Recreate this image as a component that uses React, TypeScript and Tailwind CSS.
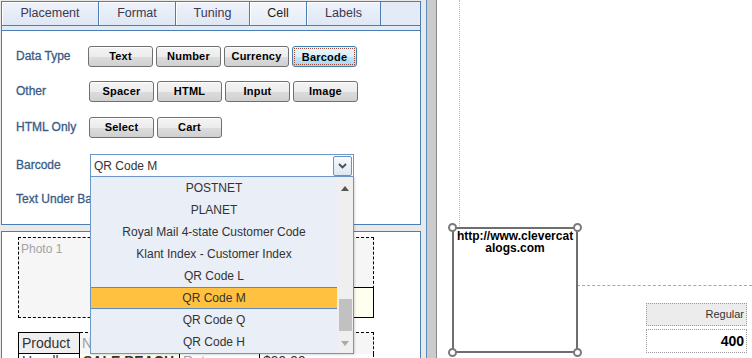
import React from "react";

function Btn({ children, active }: { children: React.ReactNode; active?: boolean }) {
  if (active) {
    return (
      <div className="w-[65px] h-[21px] rounded-[3px] border border-[#3c7fb1] bg-[linear-gradient(#eaf6fd_0%,#d9f0fc_50%,#bee6fd_50%,#a7d9f5_100%)] p-[1px] flex shrink-0">
        <div className="flex-1 border border-dotted border-[#9a4a3a] flex items-center justify-center text-[11px] font-bold text-black pt-[1px] tracking-[0.2px]">
          {children}
        </div>
      </div>
    );
  }
  return (
    <div className="w-[65px] h-[21px] rounded-[3px] border border-[#707070] bg-[linear-gradient(#f4f4f4_0%,#ececec_50%,#dddddd_50%,#d0d0d0_100%)] shadow-[inset_0_1px_0_#ffffff] flex items-center justify-center text-[11px] font-bold text-black shrink-0 tracking-[0.2px]">
      {children}
    </div>
  );
}

function Label({ children }: { children: React.ReactNode }) {
  return (
    <div className="w-[72px] shrink-0 whitespace-nowrap text-[12px] text-[#3a5c86] [-webkit-text-stroke:0.3px_#3a5c86] -mt-[2px]">{children}</div>
  );
}

const items = [
  "POSTNET",
  "PLANET",
  "Royal Mail 4-state Customer Code",
  "Klant Index - Customer Index",
  "QR Code L",
  "QR Code M",
  "QR Code Q",
  "QR Code H",
];

export default function App() {
  return (
    <div className="w-[752px] h-[358px] overflow-hidden flex bg-[#e9e9e9] font-['Liberation_Sans',Arial,sans-serif]">
      {/* Left column */}
      <div className="w-[421px] shrink-0 pl-[1px] pt-[1px] flex flex-col">
        {/* Top tab panel */}
        <div className="h-[224px] shrink-0 border border-[#4a7fb5] flex flex-col bg-white">
          <div className="h-[24px] shrink-0 flex border-b border-[#4a7fb5] bg-[#e4ebf6]">
            <div className="w-[97px] border-r border-[#4a7fb5] bg-[linear-gradient(#eef3fa,#dfe7f4)] shadow-[inset_1px_1px_0_#ffffff] flex items-center justify-center text-[12.5px] text-[#3d3850]">Placement</div>
            <div className="w-[77px] border-r border-[#4a7fb5] bg-[linear-gradient(#eef3fa,#dfe7f4)] shadow-[inset_1px_1px_0_#ffffff] flex items-center justify-center text-[12.5px] text-[#3d3850]">Format</div>
            <div className="w-[74px] border-r border-[#4a7fb5] bg-[linear-gradient(#eef3fa,#dfe7f4)] shadow-[inset_1px_1px_0_#ffffff] flex items-center justify-center text-[12.5px] text-[#3d3850]">Tuning</div>
            <div className="w-[57px] border-r border-[#4a7fb5] bg-[linear-gradient(#f3f6fb,#e6edf7)] shadow-[inset_1px_1px_0_#ffffff] flex items-center justify-center text-[12.5px] text-[#1e1e1e]">Cell</div>
            <div className="w-[74px] border-r border-[#4a7fb5] bg-[linear-gradient(#eef3fa,#dfe7f4)] shadow-[inset_1px_1px_0_#ffffff] flex items-center justify-center text-[12.5px] text-[#3d3850]">Labels</div>
            <div className="flex-1" />
          </div>
          <div className="h-[4px] shrink-0 bg-[#e2eaf6]" />
          <div className="flex-1 border-t border-[#4a7fb5] bg-white pl-[14px] flex flex-col">
            <div className="mt-[15px] h-[21px] flex items-center">
              <Label>Data Type</Label>
              <div className="flex gap-[3px]">
                <Btn>Text</Btn>
                <Btn>Number</Btn>
                <Btn>Currency</Btn>
                <Btn active>Barcode</Btn>
              </div>
            </div>
            <div className="mt-[14px] h-[21px] flex items-center">
              <Label>Other</Label>
              <div className="flex gap-[3px] ml-[1px]">
                <Btn>Spacer</Btn>
                <Btn>HTML</Btn>
                <Btn>Input</Btn>
                <Btn>Image</Btn>
              </div>
            </div>
            <div className="mt-[15px] h-[21px] flex items-center">
              <Label>HTML Only</Label>
              <div className="flex gap-[3px] ml-[1px]">
                <Btn>Select</Btn>
                <Btn>Cart</Btn>
              </div>
            </div>
            <div className="mt-[16px] h-[23px] flex items-center relative z-10">
              <Label>Barcode</Label>
              <div className="relative ml-[2px] w-[264px] h-[23px]">
                <div className="w-full h-full border border-[#6d98c6] bg-white flex items-center pl-[3px] pr-[1px]">
                  <span className="flex-1 text-[12px] text-[#333333]">QR Code M</span>
                  <div className="w-[19px] h-[20px] rounded-[2px] border border-[#6a93c0] bg-[linear-gradient(#f6f9fc,#dde7f2)] flex items-center justify-center">
                    <svg width="9" height="6" viewBox="0 0 9 6">
                      <path d="M1 1 L4.5 4.5 L8 1" fill="none" stroke="#4d4d4d" strokeWidth="1.8" />
                    </svg>
                  </div>
                </div>
                {/* dropdown list */}
                <div className="absolute left-0 top-[22px] w-[264px] h-[178px] border border-[#6d98c6] bg-[#e9eef7] flex shadow-[1px_1px_2px_rgba(0,0,0,0.15)]">
                  <div className="flex-1 flex flex-col">
                    {items.map((it) =>
                      it === "QR Code M" ? (
                        <div key={it} className="h-[22px] shrink-0 border-y border-[#5b8cc0] bg-[#ffc13f] flex items-center justify-center text-[12px] text-[#333333]">
                          {it}
                        </div>
                      ) : (
                        <div key={it} className="h-[22px] shrink-0 flex items-center justify-center text-[12px] text-[#333333]">
                          {it}
                        </div>
                      )
                    )}
                  </div>
                  <div className="w-[16px] shrink-0 bg-[#efefef] flex flex-col items-center">
                    <div className="h-[22px] flex items-center justify-center">
                      <svg width="8" height="5" viewBox="0 0 8 5">
                        <path d="M0 5 L4 0 L8 5 Z" fill="#555555" />
                      </svg>
                    </div>
                    <div className="flex-1" />
                    <div className="w-[13px] h-[32px] bg-[#c1c1c1] ml-[1px]" />
                    <div className="h-[22px] flex items-center justify-center pt-[3px]">
                      <svg width="8" height="5" viewBox="0 0 8 5">
                        <path d="M0 0 L8 0 L4 5 Z" fill="#a9a9a9" />
                      </svg>
                    </div>
                  </div>
                </div>
              </div>
            </div>
            <div className="mt-[12px] h-[21px] flex items-center">
              <Label>Text Under Barcode</Label>
            </div>
          </div>
        </div>
        {/* Lower panel */}
        <div className="mt-[6px] flex-1 border border-[#4a7fb5] bg-white pl-[16px] pt-[5px] flex flex-col">
          <div className="w-[356px] h-[81px] shrink-0 border border-dashed border-black bg-[#f6f6f6] flex flex-col justify-between">
            <div className="pl-[2px] pt-[2px] text-[12px] text-[#a3a3a3]">Photo 1</div>
            <div className="self-end -mr-px -mb-px w-[180px] h-[31px] border border-black bg-[#fffff0]" />
          </div>
          <div className="mt-[14px] w-[356px] flex flex-col">
            <div className="h-[22px] flex">
              <div className="w-[62px] border border-black bg-[#efefef] flex items-center pl-[3px] text-[14px] text-[#333333]">Product</div>
              <div className="flex-1 border-t border-r border-dashed border-black bg-[#f6f6f6] flex items-center pl-[2px] text-[14px] text-[#a0a0a0]">Name</div>
            </div>
            <div className="h-[22px] flex text-[14px] leading-[14px] text-[#333333]">
              <div className="w-[62px] border-x border-black pl-[3px]">Handle</div>
              <div className="w-[100px] border-r border-black bg-[#fffff0] pl-[3px] font-bold">SALE BEACH</div>
              <div className="w-[80px] border-r border-black pl-[3px] text-[#a0a0a0]">Return</div>
              <div className="flex-1 border-r border-dashed border-black pl-[3px]">$99.99</div>
            </div>
          </div>
        </div>
      </div>
      {/* Splitter */}
      <div className="w-[5px] shrink-0 bg-[#e9e9e9]" />
      <div className="w-[1px] shrink-0 bg-[#5b8cc0]" />
      <div className="w-[9px] shrink-0 bg-[#cbcbcb]" />
      <div className="w-[1px] shrink-0 bg-[#8a8a8a]" />
      {/* Canvas */}
      <div className="flex-1 bg-white relative">
        <div className="absolute left-[22px] top-0 h-[226px] border-l border-dotted border-[#bdbdbd]" />
        <div className="absolute left-[140px] right-0 top-[285px] border-t border-dashed border-[#a8a8a8]" />
        <div className="absolute left-[15px] top-[227px] w-[126px] h-[126px] border-2 border-[#6e6e6e] px-[1px] pt-[1px] text-center break-all text-[12px] leading-[12px] font-bold text-black">
          http://www.clevercatalogs.com
        </div>
        <div className="absolute left-[11px] top-[223px] w-[9px] h-[9px] rounded-full border-2 border-[#7a7a7a] bg-white" />
        <div className="absolute left-[136px] top-[223px] w-[9px] h-[9px] rounded-full border-2 border-[#7a7a7a] bg-white" />
        <div className="absolute left-[11px] top-[348px] w-[9px] h-[9px] rounded-full border-2 border-[#7a7a7a] bg-white" />
        <div className="absolute left-[136px] top-[348px] w-[9px] h-[9px] rounded-full border-2 border-[#7a7a7a] bg-white" />
        <div className="absolute left-[209px] top-[303px] w-[101px] h-[23px] border border-dotted border-[#9a9a9a] bg-[#ececec] flex items-center justify-end pr-[2px] text-[11px] text-[#333333]">
          Regular
        </div>
        <div className="absolute left-[209px] top-[329px] w-[101px] h-[24px] border border-dotted border-[#9a9a9a] bg-white flex items-center justify-end pr-[2px] text-[14px] font-bold text-black">
          400
        </div>
      </div>
    </div>
  );
}
